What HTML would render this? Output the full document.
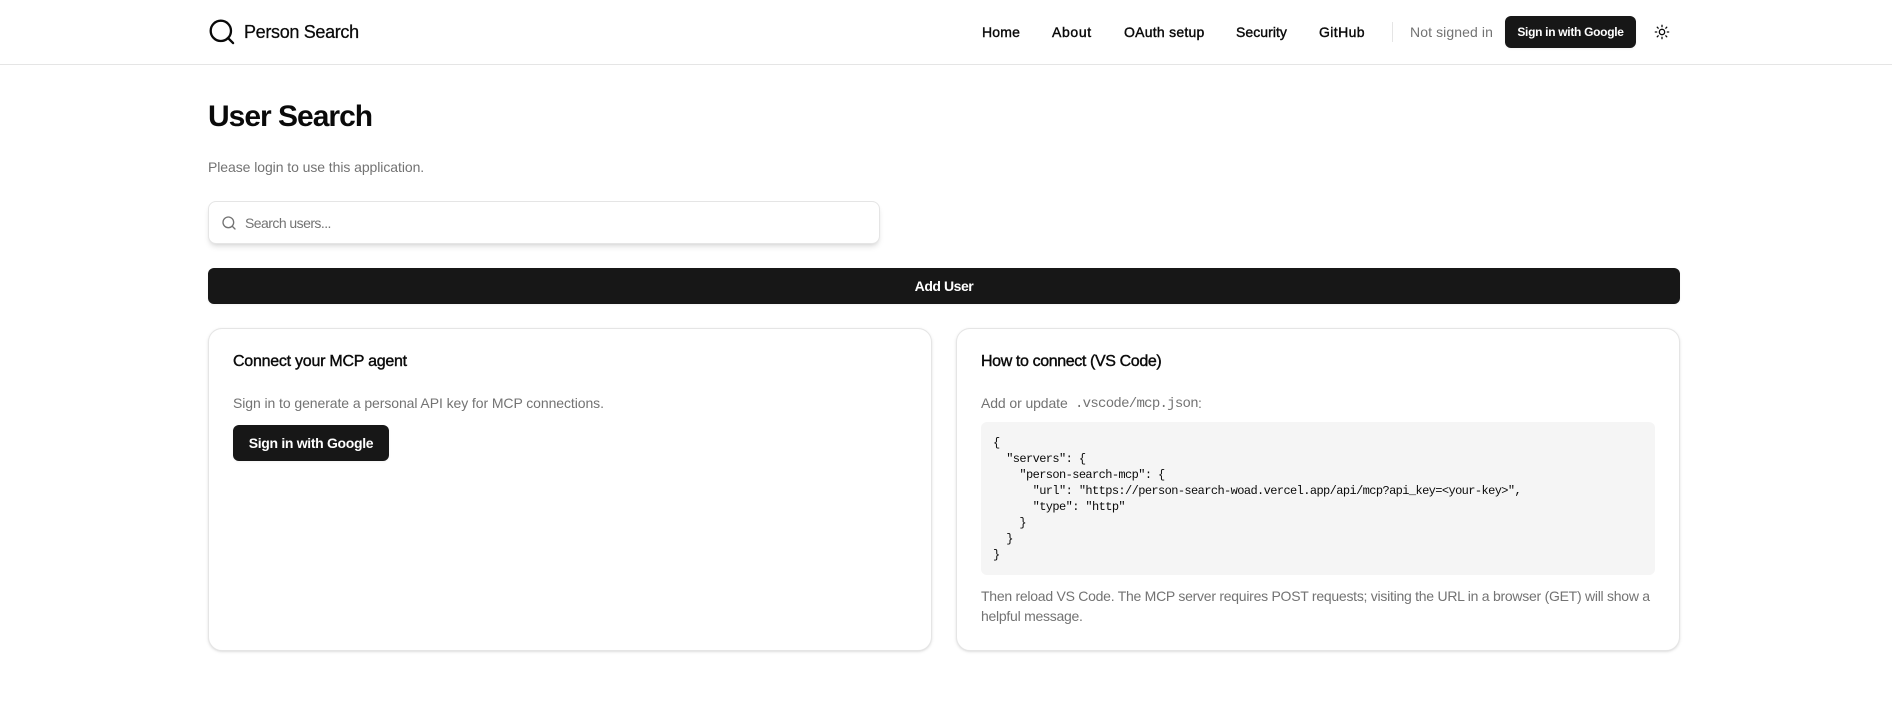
<!DOCTYPE html>
<html lang="en"><head><meta charset="utf-8"><title>Person Search</title>
<style>
*{box-sizing:border-box}
html,body{margin:0;padding:0;width:1892px;height:724px;overflow:hidden;background:#fff;font-family:"Liberation Sans",sans-serif;color:#0a0a0a}
.t{position:absolute;white-space:nowrap;line-height:20px}
.nav{font-size:14px;font-weight:400;top:22px;color:#0a0a0a;letter-spacing:.2px;-webkit-text-stroke:.4px #0a0a0a}
.m{color:#737373;font-size:14px;letter-spacing:-.1px}
.b{position:absolute;background:#171717;color:#fff;font-weight:700;border-radius:6px;display:flex;align-items:center;justify-content:center;white-space:nowrap;box-shadow:0 1px 2px rgba(0,0,0,.05)}
.card{position:absolute;top:328px;height:323px;border:1px solid #e5e5e5;border-radius:14px;background:#fff;box-shadow:0 1px 3px rgba(0,0,0,.1),0 1px 2px -1px rgba(0,0,0,.1)}
.h{font-size:16px;font-weight:400;top:352px;letter-spacing:-.25px;color:#0a0a0a;-webkit-text-stroke:.4px #0a0a0a}
pre{position:absolute;left:981px;top:422px;width:674px;height:153px;margin:0;padding:13px 12px 0;background:#f5f5f5;border-radius:6px;font:12px/16px "Liberation Mono",monospace;letter-spacing:-.6px;color:#0a0a0a}
</style></head><body>
<div style="position:absolute;left:0;top:0;width:1892px;height:65px;border-bottom:1px solid #e5e5e5"></div>
<svg style="position:absolute;left:208px;top:18px" width="28" height="28" viewBox="0 0 24 24" fill="none" stroke="#0a0a0a" stroke-width="2" stroke-linecap="round"><circle cx="11" cy="11" r="8.7"/><path d="M21.5 21.5l-4.3-4.3"/></svg>
<div class="t" style="left:244px;top:22px;font-size:18px;font-weight:400;letter-spacing:-.33px;-webkit-text-stroke:.25px #0a0a0a">Person Search</div>
<div class="t nav" style="left:982px">Home</div>
<div class="t nav" style="left:1052px;letter-spacing:.65px">About</div>
<div class="t nav" style="left:1124px;letter-spacing:.25px">OAuth setup</div>
<div class="t nav" style="left:1236px;letter-spacing:.05px">Security</div>
<div class="t nav" style="left:1319px;letter-spacing:.4px">GitHub</div>
<div style="position:absolute;left:1392px;top:22px;width:1px;height:20px;background:#e5e5e5"></div>
<div class="t m" style="left:1410px;top:22px;letter-spacing:.1px">Not signed in</div>
<div class="b" style="left:1505px;top:16px;width:131px;height:32px;font-size:12px;letter-spacing:-.3px">Sign in with Google</div>
<svg style="position:absolute;left:1654px;top:24px" width="16" height="16" viewBox="0 0 24 24" fill="none" stroke="#0a0a0a" stroke-width="2" stroke-linecap="round"><circle cx="12" cy="12" r="4"/><path d="M12 2v2M12 20v2M4.9 4.9l1.4 1.4M17.7 17.7l1.4 1.4M2 12h2M20 12h2M6.3 17.7l-1.4 1.4M19.1 4.9l-1.4 1.4"/></svg>

<div class="t" style="left:208px;top:99px;font-size:30px;line-height:36px;font-weight:700;letter-spacing:-1px">User Search</div>
<div class="t m" style="left:208px;top:157px;letter-spacing:-.07px">Please login to use this application.</div>

<div style="position:absolute;left:208px;top:201px;width:672px;height:43px;border:1px solid #e5e5e5;border-radius:8px;background:#fff;box-shadow:0 4px 6px -1px rgba(0,0,0,.1),0 2px 4px -2px rgba(0,0,0,.1)"></div>
<svg style="position:absolute;left:221px;top:215px" width="16" height="16" viewBox="0 0 24 24" fill="none" stroke="#737373" stroke-width="2" stroke-linecap="round"><circle cx="11" cy="11" r="8"/><path d="M21 21l-4.3-4.3"/></svg>
<div class="t m" style="left:245px;top:213px;letter-spacing:-.55px">Search users...</div>

<div class="b" style="left:208px;top:268px;width:1472px;height:36px;font-size:14px;letter-spacing:-.45px">Add User</div>

<div class="card" style="left:208px;width:724px"></div>
<div class="card" style="left:956px;width:724px"></div>

<div class="t h" style="left:233px">Connect your MCP agent</div>
<div class="t m" style="left:233px;top:393px;letter-spacing:-.08px">Sign in to generate a personal API key for MCP connections.</div>
<div class="b" style="left:233px;top:425px;width:156px;height:36px;font-size:14px;letter-spacing:-.32px">Sign in with Google</div>

<div class="t h" style="left:981px;letter-spacing:-.38px">How to connect (VS Code)</div>
<div class="t m" style="left:981px;top:393px">Add or update</div>
<div class="t m" style="left:1075px;top:394px;font-family:'Liberation Mono',monospace;letter-spacing:-.72px">.vscode/mcp.json</div>
<div class="t m" style="left:1198px;top:393px">:</div>
<pre>{
  "servers": {
    "person-search-mcp": {
      "url": "https://person-search-woad.vercel.app/api/mcp?api_key=&lt;your-key&gt;",
      "type": "http"
    }
  }
}</pre>
<div class="t m" style="left:981px;top:586px;letter-spacing:-.26px">Then reload VS Code. The MCP server requires POST requests; visiting the URL in a browser (GET) will show a</div>
<div class="t m" style="left:981px;top:606px;letter-spacing:-.26px">helpful message.</div>
</body></html>
